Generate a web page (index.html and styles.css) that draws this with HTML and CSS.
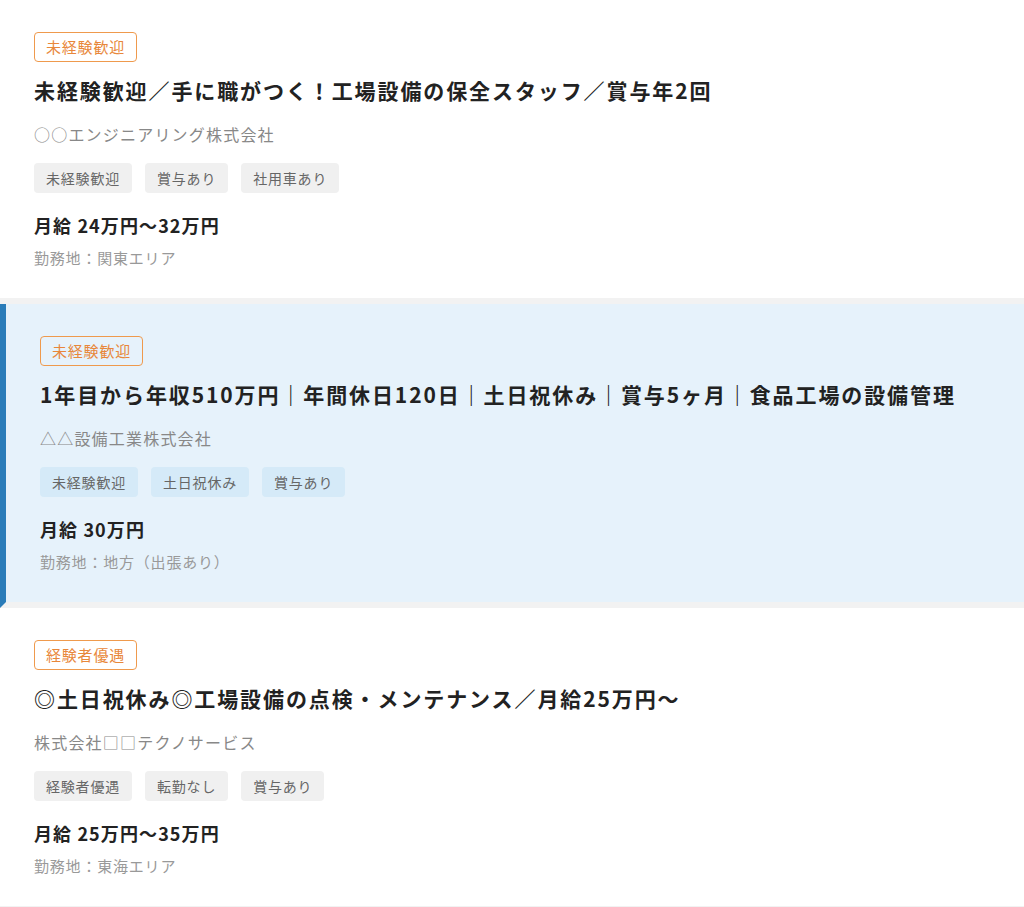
FILE: index.html
```html
<!DOCTYPE html>
<html lang="ja">
<head>
<meta charset="utf-8">
<title>求人一覧</title>
<link rel="stylesheet" href="styles.css">
</head>
<body>
<ul class="job-list">
  <li class="job">
    <span class="badge">未経験歓迎</span>
    <h2 class="job-title">未経験歓迎／手に職がつく！工場設備の保全スタッフ／賞与年2回</h2>
    <p class="company">○○エンジニアリング株式会社</p>
    <ul class="tags">
      <li class="tag">未経験歓迎</li>
      <li class="tag">賞与あり</li>
      <li class="tag">社用車あり</li>
    </ul>
    <p class="salary">月給 24万円〜32万円</p>
    <p class="location">勤務地：関東エリア</p>
  </li>
  <li class="job job--active">
    <span class="badge">未経験歓迎</span>
    <h2 class="job-title">1年目から年収510万円｜年間休日120日｜土日祝休み｜賞与5ヶ月｜食品工場の設備管理</h2>
    <p class="company">△△設備工業株式会社</p>
    <ul class="tags">
      <li class="tag">未経験歓迎</li>
      <li class="tag">土日祝休み</li>
      <li class="tag">賞与あり</li>
    </ul>
    <p class="salary">月給 30万円</p>
    <p class="location">勤務地：地方（出張あり）</p>
  </li>
  <li class="job">
    <span class="badge">経験者優遇</span>
    <h2 class="job-title">◎土日祝休み◎工場設備の点検・メンテナンス／月給25万円〜</h2>
    <p class="company">株式会社□□テクノサービス</p>
    <ul class="tags">
      <li class="tag">経験者優遇</li>
      <li class="tag">転勤なし</li>
      <li class="tag">賞与あり</li>
    </ul>
    <p class="salary">月給 25万円〜35万円</p>
    <p class="location">勤務地：東海エリア</p>
  </li>
</ul>
</body>
</html>
```
FILE: styles.css
```css
html, body {
  margin: 0;
  padding: 0;
  background: #ffffff;
}

body {
  font-family: "Noto Sans CJK JP", "Noto Sans", sans-serif;
  color: #222222;
  letter-spacing: 0.05em;
}

.job-list {
  list-style: none;
  margin: 0;
  padding: 0;
}

.job {
  display: flex;
  flex-direction: column;
  align-items: flex-start;
  box-sizing: content-box;
  height: 266px;
  padding: 32px 34px 0;
  border-bottom: 6px solid #f2f2f2;
}

.job--active {
  background: #e6f2fb;
  border-left: 6px solid #2a7cb9;
}

.badge {
  display: inline-block;
  font-size: 15px;
  line-height: 24px;
  padding: 2px 11px;
  color: #e8873a;
  border: 1.5px solid #ef9a4d;
  border-radius: 4px;
}

.job-title {
  margin: 13px 0 0;
  font-size: 21px;
  line-height: 30px;
  letter-spacing: 1.9px;
  font-weight: 700;
  color: #222222;
}

.company {
  margin: 17px 0 0;
  font-size: 16px;
  line-height: 24px;
  letter-spacing: 1.2px;
  color: #888888;
}

.tags {
  list-style: none;
  display: flex;
  gap: 13px;
  margin: 17px 0 0;
  padding: 0;
}

.tag {
  font-size: 14px;
  line-height: 30px;
  padding: 0 12px;
  background: #f0f0f0;
  color: #666666;
  border-radius: 4px;
}

.job--active .tag {
  background: #d5eaf8;
}

.salary {
  margin: 19px 0 0;
  font-size: 18px;
  line-height: 26px;
  letter-spacing: 1.1px;
  font-weight: 700;
  color: #222222;
}

.location {
  margin: 8px 0 0;
  font-size: 15px;
  line-height: 24px;
  color: #999999;
}
```
